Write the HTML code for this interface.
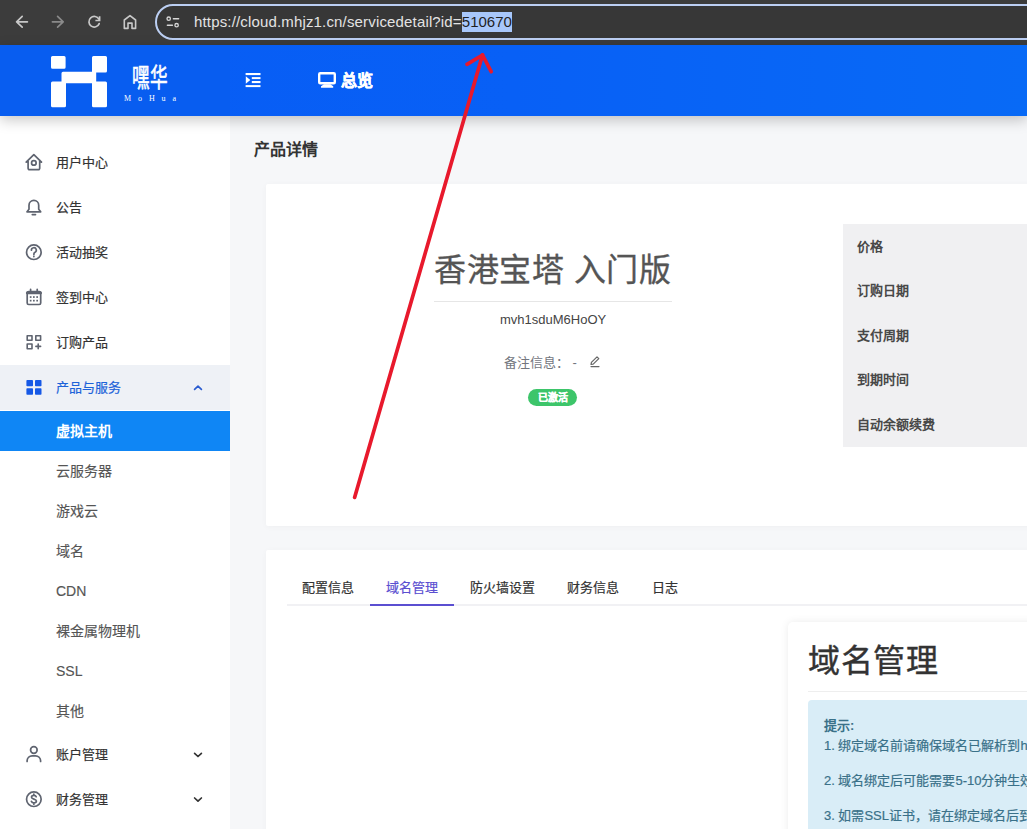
<!DOCTYPE html>
<html lang="zh-CN"><head><meta charset="utf-8">
<style>
*{box-sizing:border-box;margin:0;padding:0}
html,body{width:1027px;height:829px;overflow:hidden;background:#f6f7f9;font-family:"Liberation Sans",sans-serif;position:relative}
.abs{position:absolute;white-space:nowrap}
#chrome{left:0;top:0;width:1027px;height:45px;background:#3c3c3c}
#omni{left:155px;top:4px;width:900px;height:36px;border:2px solid #bccff3;border-radius:18px;background:#373737}
#url{left:194px;top:12px;font-size:15px;color:#e3e3e3;line-height:20px;letter-spacing:.16px}
#url .sel{background:#a8c7fa;color:#1f1f1f;display:inline-block;height:20px;letter-spacing:0;vertical-align:top}
#hdr{left:0;top:45px;width:1027px;height:71px;background:linear-gradient(90deg,#075cf4 0%,#0860f6 50%,#086af6 100%);box-shadow:0 4px 13px rgba(0,0,0,.22);z-index:3}
#hdrl{left:0;top:0;width:230px;height:71px;background:#085df0}
#side{left:0;top:116px;width:230px;height:713px;background:#fff;z-index:2}
.mi{position:absolute;left:0;width:230px;height:45px;font-size:13px;color:#333;line-height:45px;-webkit-text-stroke:.2px currentColor}
.mi .t{position:absolute;left:56px;top:0}
.si{position:absolute;left:0;width:230px;height:40px;font-size:14px;color:#555;line-height:40px;-webkit-text-stroke:.15px currentColor}
.si .t{position:absolute;left:56px;top:0}
.card{position:absolute;background:#fff;border-radius:2px;box-shadow:0 1px 6px rgba(0,0,0,.035)}
.lbl{position:absolute;left:857px;font-size:13px;font-weight:bold;color:#484848;line-height:20px}
.tab{position:absolute;top:577.5px;font-size:13px;color:#333;line-height:20px;-webkit-text-stroke:.2px currentColor}
.tip{position:absolute;white-space:nowrap;left:824px;font-size:13px;color:#3a7189;line-height:20px;-webkit-text-stroke:.2px currentColor}
</style></head><body>
<div id="chrome" class="abs"></div>
<div id="omni" class="abs"></div>
<svg class="abs" style="left:0;top:0" width="200" height="45" viewBox="0 0 200 45" fill="none" stroke-linecap="round" stroke-linejoin="round">
  <path d="M16.6 21.8H27.4M22.2 16.4L16.6 21.8L22.2 27.2" stroke="#c8c8c8" stroke-width="1.7"/>
  <path d="M52.4 21.8H63.2M57.6 16.4L63.2 21.8L57.6 27.2" stroke="#8a8a8a" stroke-width="1.7"/>
  <path d="M98.9 19.2A5.3 5.3 0 1 0 99.2 23.6" stroke="#c8c8c8" stroke-width="1.7"/>
  <path d="M99.6 16.3V20.5H95.4" stroke="#c8c8c8" stroke-width="1.7" stroke-linecap="butt" stroke-linejoin="miter"/>
  <path d="M124.3 28.4V20L130 15.6L135.6 20V28.4H132V23.1H128V28.4Z" stroke="#c8c8c8" stroke-width="1.6"/>
  <circle cx="168.7" cy="18.7" r="1.7" stroke="#d8d8d8" stroke-width="1.3"/>
  <path d="M173.4 18.7H178.6M167.4 25.2H172.4" stroke="#d8d8d8" stroke-width="1.5"/>
  <circle cx="176.6" cy="25.2" r="1.7" stroke="#d8d8d8" stroke-width="1.3"/>
</svg>
<div id="url" class="abs">https://cloud.mhjz1.cn/servicedetail?id=<span class="sel">510670</span></div>

<div id="hdr" class="abs">
  <div id="hdrl" class="abs"></div>
  <svg class="abs" style="left:0;top:0" width="400" height="71" viewBox="0 45 400 71">
    <g fill="#fff" stroke="#fff" stroke-width="3" stroke-linejoin="round">
      <rect x="52.5" y="57.5" width="11.6" height="9.7"/>
      <path d="M93.5 57.5H105.5V70.9H94.7V82.9H105.5V105.7H93.5V81.8H64.5V105.7H52.5V82.9H63V73.2H93.5Z"/>
    </g>
    <g fill="#fff">
      <rect x="245.6" y="73" width="14.9" height="2.1"/>
      <rect x="251.8" y="77.1" width="8.7" height="2"/>
      <rect x="251.8" y="81" width="8.7" height="2.1"/>
      <rect x="245.6" y="85.1" width="14.9" height="2"/>
      <path d="M245.8 76.2L250.3 80L245.8 83.8Z"/>
    </g>
    <rect x="319.2" y="73.2" width="15.6" height="10.1" rx="1" fill="none" stroke="#fff" stroke-width="2.4"/>
    <path d="M321 87.8H333.2V86.2L330.3 84.2H324L321 86.2Z" fill="#fff"/>
  </svg>
  <div class="abs" style="left:132px;top:16px;font-family:'Liberation Serif',serif;font-size:20px;color:#fff;font-weight:normal;line-height:26px;transform:scale(.88,1.3);-webkit-text-stroke:.5px #fff;transform-origin:0 0">嘿华</div>
  <div class="abs" style="left:124px;top:49px;font-family:'Liberation Serif',serif;font-size:8px;color:#fff;line-height:10px;letter-spacing:6.9px">MoHua</div>
  <div class="abs" style="left:341px;top:26px;font-size:16px;color:#fff;font-weight:bold;line-height:20px;-webkit-text-stroke:.5px #fff">总览</div>
</div>

<div id="side" class="abs">
  <div class="mi" style="top:24px"><span class="t">用户中心</span></div>
  <div class="mi" style="top:69px"><span class="t">公告</span></div>
  <div class="mi" style="top:114px"><span class="t">活动抽奖</span></div>
  <div class="mi" style="top:159px"><span class="t">签到中心</span></div>
  <div class="mi" style="top:204px"><span class="t">订购产品</span></div>
  <div class="mi" style="top:249px;background:#eef1f6;color:#1d63d9"><span class="t">产品与服务</span></div>
  <div class="si" style="top:295px;background:#0f86f5;color:#fff;font-weight:bold;-webkit-text-stroke:0"><span class="t">虚拟主机</span></div>
  <div class="si" style="top:335px"><span class="t">云服务器</span></div>
  <div class="si" style="top:375px"><span class="t">游戏云</span></div>
  <div class="si" style="top:415px"><span class="t">域名</span></div>
  <div class="si" style="top:455px"><span class="t">CDN</span></div>
  <div class="si" style="top:495px"><span class="t">裸金属物理机</span></div>
  <div class="si" style="top:535px"><span class="t">SSL</span></div>
  <div class="si" style="top:575px"><span class="t">其他</span></div>
  <div class="mi" style="top:616px"><span class="t">账户管理</span></div>
  <div class="mi" style="top:661px"><span class="t">财务管理</span></div>
  <svg class="abs" style="left:0;top:0" width="230" height="713" viewBox="0 116 230 713" fill="none" stroke="#5f6470" stroke-width="1.7" stroke-linecap="round" stroke-linejoin="round">
    <path d="M26.2 162.2L33.85 154.7L41.5 162.2M28.1 160.2V168.3a1.4 1.4 0 0 0 1.4 1.4H38.3a1.4 1.4 0 0 0 1.4-1.4V160.2"/>
    <circle cx="33.85" cy="162.9" r="2.3"/>
    <path d="M29 209.3V205.3a4.85 4.85 0 0 1 9.7 0V209.3l2 2.5H27z"/>
    <path d="M32.3 214.6H35.5"/>
    <circle cx="33.85" cy="252.2" r="7.3"/>
    <path d="M31.4 250.2a2.45 2.45 0 1 1 3.6 2.1c-.8.4-1.1.9-1.1 1.8v.5"/>
    <circle cx="33.85" cy="256.5" r=".9" fill="#5f6470" stroke="none"/>
    <rect x="27.2" y="291.7" width="13.5" height="12.8" rx="1.5"/>
    <path d="M27.2 292.9H40.7" stroke-width="2.6"/>
    <path d="M30.6 289.3V291M37.2 289.3V291"/>
    <g fill="#5f6470" stroke="none"><rect x="29.8" y="296.2" width="1.7" height="1.7"/><rect x="33" y="296.2" width="1.7" height="1.7"/><rect x="36.3" y="296.2" width="1.7" height="1.7"/><rect x="29.8" y="299.8" width="1.7" height="1.7"/><rect x="33" y="299.8" width="1.7" height="1.7"/><rect x="36.3" y="299.8" width="1.7" height="1.7"/></g>
    <rect x="27.2" y="335.7" width="4.8" height="4.6" stroke-width="1.6"/>
    <rect x="35.8" y="335.7" width="4.8" height="4.6" stroke-width="1.6"/>
    <rect x="27.2" y="344" width="4.8" height="4.8" stroke-width="1.6"/>
    <path d="M35.9 346.4H40.6M38.2 344.1V348.7" stroke-width="1.6"/>
    <circle cx="33.85" cy="750" r="3.3"/>
    <path d="M27.1 761.4v-.6a5 5 0 0 1 5-5h3.5a5 5 0 0 1 5 5v.6"/>
    <circle cx="33.85" cy="799.2" r="7.3"/>
    <path d="M36.2 796.8c-.3-1-1.2-1.5-2.3-1.5c-1.4 0-2.4.8-2.4 1.9c0 2.4 4.9 1.4 4.9 3.9c0 1.1-1 1.9-2.5 1.9c-1.2 0-2.1-.6-2.5-1.6M33.85 794.1V795.3M33.85 802.9V804.2"/>
    <path d="M194.6 389.4L198 386.2L201.4 389.4" stroke="#2a5cd0"/>
    <path d="M194.6 753.3L198 756.5L201.4 753.3" stroke="#333"/>
    <path d="M194.6 798L198 801.2L201.4 798" stroke="#333"/>
  </svg>
  <svg class="abs" style="left:0;top:0" width="230" height="713" viewBox="0 116 230 713">
    <g fill="#1659e6">
      <rect x="26.4" y="379.9" width="6.6" height="6.3" rx=".8"/>
      <rect x="35" y="379.9" width="6.5" height="6.3" rx=".8"/>
      <rect x="26.4" y="388.3" width="6.6" height="6.5" rx=".8"/>
      <rect x="35" y="388.3" width="6.5" height="6.5" rx=".8"/>
    </g>
  </svg>
</div>

<div class="abs" style="left:254px;top:139px;font-size:16px;font-weight:bold;color:#333;line-height:22px">产品详情</div>
<div class="card" style="left:266px;top:184px;width:800px;height:341.6px"></div>
<div class="card" style="left:266px;top:549.6px;width:800px;height:300px"></div>

<div class="abs" style="left:434px;top:249px;font-size:32px;letter-spacing:.6px;color:#555;line-height:42px;-webkit-text-stroke:.35px #555">香港宝塔 入门版</div>
<div class="abs" style="left:434px;top:301px;width:238px;height:1px;background:#e6e6e6"></div>
<div class="abs" style="left:500px;top:310px;font-size:13px;color:#444;line-height:20px">mvh1sduM6HoOY</div>
<div class="abs" style="left:504px;top:353px;font-size:13px;color:#73767e;line-height:20px">备注信息：&nbsp;-&nbsp;&nbsp;</div>
<svg class="abs" style="left:588px;top:354px" width="14" height="14" viewBox="0 0 14 14" fill="none" stroke="#666" stroke-width="1.2" stroke-linecap="round" stroke-linejoin="round">
  <path d="M3 10.5L3.4 8.4L9 2.8L10.8 4.6L5.2 10.2Z M3 12.6H11"/>
</svg>
<div class="abs" style="left:528px;top:389px;width:49px;height:17px;border-radius:9px;background:#3dc56a;color:#fff;font-size:10px;font-weight:bold;line-height:17px;text-align:center;-webkit-text-stroke:.3px #fff">已激活</div>

<div class="abs" style="left:843px;top:224.3px;width:200px;height:222.3px;background:#f0f0f2"></div>
<div class="lbl" style="top:237px">价格</div>
<div class="lbl" style="top:281px">订购日期</div>
<div class="lbl" style="top:326px">支付周期</div>
<div class="lbl" style="top:370px">到期时间</div>
<div class="lbl" style="top:415px">自动余额续费</div>

<div class="abs" style="left:287px;top:604px;width:760px;height:2px;background:#f1f1f4"></div>
<div class="tab" style="left:302px">配置信息</div>
<div class="tab" style="left:386px;color:#5b4fd1">域名管理</div>
<div class="abs" style="left:370px;top:603.5px;width:84px;height:2.3px;background:#5b4fd1"></div>
<div class="tab" style="left:470px">防火墙设置</div>
<div class="tab" style="left:567px">财务信息</div>
<div class="tab" style="left:652px">日志</div>

<div class="abs" style="left:787.7px;top:621.9px;width:300px;height:300px;background:#fff;border-radius:5px;box-shadow:0 0 8px rgba(0,0,0,.08)"></div>
<div class="abs" style="left:808px;top:640px;font-size:32px;letter-spacing:.5px;color:#333;line-height:42px;-webkit-text-stroke:.4px #333">域名管理</div>
<div class="abs" style="left:808px;top:691px;width:260px;height:1px;background:#eee"></div>
<div class="abs" style="left:808px;top:700.4px;width:260px;height:200px;background:#d9edf7;border-radius:4px"></div>
<div class="tip" style="top:715.5px;font-weight:bold;-webkit-text-stroke:0">提示:</div>
<div class="tip" style="top:735.5px">1. 绑定域名前请确保域名已解析到h</div>
<div class="tip" style="top:770.5px">2. 域名绑定后可能需要5-10分钟生效</div>
<div class="tip" style="top:805.5px">3. 如需SSL证书，请在绑定域名后到</div>

<svg class="abs" style="left:0;top:0;z-index:10" width="1027" height="829" viewBox="0 0 1027 829" fill="none" stroke="#e8192c" stroke-width="3.7" stroke-linecap="round" stroke-linejoin="round">
  <path d="M354.6 497.4L482.5 55"/>
  <path d="M467 64.4L482.5 55L491.2 71.7"/>
</svg>
</body></html>
